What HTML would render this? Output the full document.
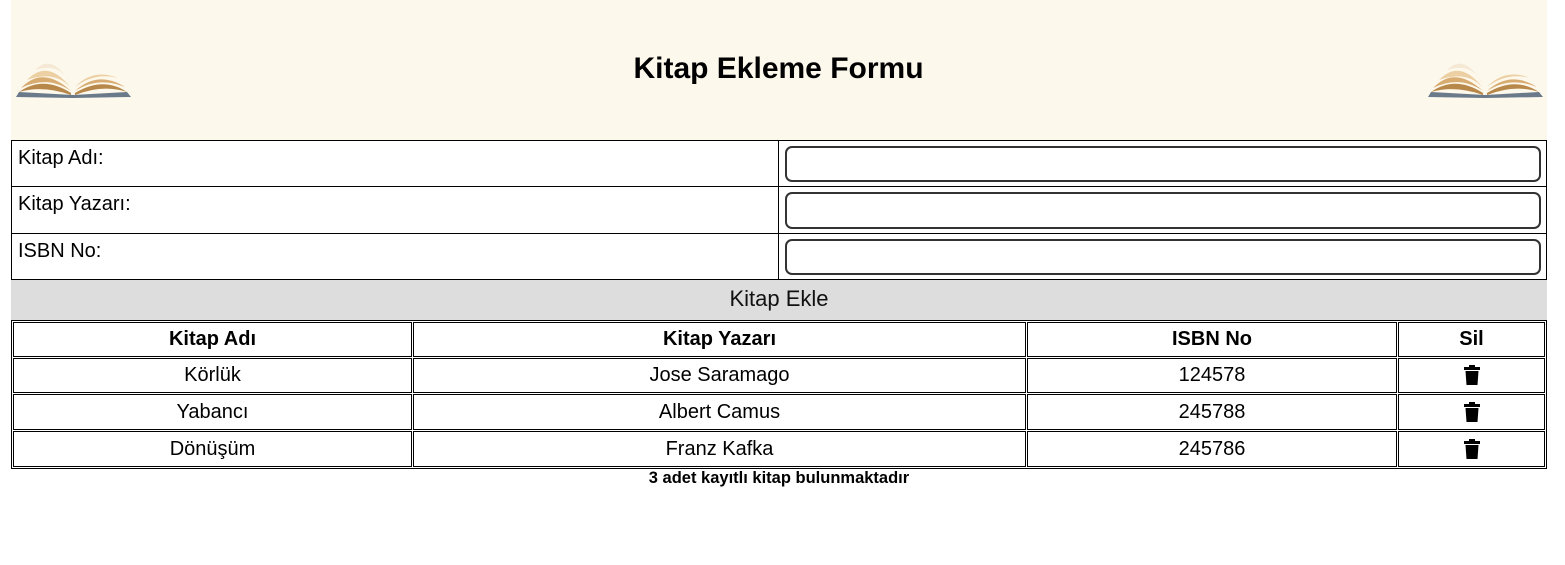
<!DOCTYPE html>
<html><head><meta charset="utf-8"><style>
body{margin:0;width:1565px;height:565px;background:#fff;font-family:"Liberation Sans",Arial,sans-serif;position:relative;overflow:hidden}
.a{position:absolute;box-sizing:border-box}
.hdr{left:11px;top:0;width:1536px;height:140px;background:#fdf8ec}
h1{position:absolute;left:0;width:1557px;top:52px;margin:0;text-align:center;font-size:30px;font-weight:bold}
.lc{left:11px;width:768px;border:1px solid #000;font-size:20px;padding:6px 6px}
.rc{left:778px;width:769px;border:1px solid #000;border-left:none}
.in{left:785px;width:756px;border:2px solid #333;border-radius:7px;background:#fff}
.btn{left:11px;top:280px;width:1536px;height:40px;background:#ddd;text-align:center;font-size:22px;line-height:38px;color:#111}
.tb{left:11px;top:320px;width:1536px;height:149px;border:1px solid #000}
.c{border:1px solid #000;font-size:20px;text-align:center;display:flex;align-items:center;justify-content:center}
.h{font-weight:bold}
</style></head><body>
<div class="a hdr"></div>
<svg class="a" style="left:13px;top:40px" width="120" height="60" viewBox="0 0 120 60">
<path d="M3 57 L60 58 L118 57 L114 52 L60 55 L6 52Z" fill="#6a7a8a"/>
<path d="M6 52 Q30 35 58 53 L58 55 Q30 45 6 52Z" fill="#b8884a"/>
<path d="M8 48 Q30 25 58 51 Q35 35 8 48Z" fill="#d8ac70"/>
<path d="M14 40 Q35 18 58 48 Q42 30 14 40Z" fill="#ecd0a4"/>
<path d="M22 30 Q40 12 58 45 Q48 22 22 30Z" fill="#f5e8d4"/>
<path d="M62 55 Q90 44 114 52 Q90 36 62 53Z" fill="#b8884a"/>
<path d="M62 51 Q85 30 112 47 Q85 36 62 51Z" fill="#d8ac70"/>
<path d="M62 47 Q80 28 105 38 Q82 32 62 47Z" fill="#ecd0a4"/>
<path d="M61 46 Q68 22 74 3 Q67 25 61 46Z" fill="#eee0cc"/>
</svg>
<svg class="a" style="left:1425px;top:40px" width="120" height="60" viewBox="0 0 120 60">
<path d="M3 57 L60 58 L118 57 L114 52 L60 55 L6 52Z" fill="#6a7a8a"/>
<path d="M6 52 Q30 35 58 53 L58 55 Q30 45 6 52Z" fill="#b8884a"/>
<path d="M8 48 Q30 25 58 51 Q35 35 8 48Z" fill="#d8ac70"/>
<path d="M14 40 Q35 18 58 48 Q42 30 14 40Z" fill="#ecd0a4"/>
<path d="M22 30 Q40 12 58 45 Q48 22 22 30Z" fill="#f5e8d4"/>
<path d="M62 55 Q90 44 114 52 Q90 36 62 53Z" fill="#b8884a"/>
<path d="M62 51 Q85 30 112 47 Q85 36 62 51Z" fill="#d8ac70"/>
<path d="M62 47 Q80 28 105 38 Q82 32 62 47Z" fill="#ecd0a4"/>
<path d="M61 46 Q68 22 74 3 Q67 25 61 46Z" fill="#eee0cc"/>
</svg>
<h1>Kitap Ekleme Formu</h1>
<div class="a lc" style="top:140px;height:47px">Kitap Adı:</div>
<div class="a lc" style="top:186px;height:48px">Kitap Yazarı:</div>
<div class="a lc" style="top:233px;height:47px">ISBN No:</div>
<div class="a rc" style="top:140px;height:47px"></div>
<div class="a rc" style="top:186px;height:48px"></div>
<div class="a rc" style="top:233px;height:47px"></div>
<div class="a in" style="top:146px;height:36px"></div>
<div class="a in" style="top:192px;height:37px"></div>
<div class="a in" style="top:239px;height:36px"></div>
<div class="a btn">Kitap Ekle</div>
<div class="a tb"></div>
<div class="a c h" style="left:13px;top:322px;width:399px;height:35px">Kitap Adı</div>
<div class="a c h" style="left:413px;top:322px;width:613px;height:35px">Kitap Yazarı</div>
<div class="a c h" style="left:1027px;top:322px;width:370px;height:35px">ISBN No</div>
<div class="a c h" style="left:1398px;top:322px;width:147px;height:35px">Sil</div>

<div class="a c" style="left:13px;top:358px;width:399px;height:35px">Körlük</div>
<div class="a c" style="left:413px;top:358px;width:613px;height:35px">Jose Saramago</div>
<div class="a c" style="left:1027px;top:358px;width:370px;height:35px">124578</div>
<div class="a c" style="left:1398px;top:358px;width:147px;height:35px"><svg width="18" height="21" viewBox="0 0 18 21"><rect x="1" y="2" width="16" height="3" fill="#000"/><rect x="6" y="0" width="6" height="3" fill="#000"/><path d="M2.5 6 H15.5 L14.5 20 H3.5Z" fill="#000"/></svg></div>

<div class="a c" style="left:13px;top:394px;width:399px;height:36px">Yabancı</div>
<div class="a c" style="left:413px;top:394px;width:613px;height:36px">Albert Camus</div>
<div class="a c" style="left:1027px;top:394px;width:370px;height:36px">245788</div>
<div class="a c" style="left:1398px;top:394px;width:147px;height:36px"><svg width="18" height="21" viewBox="0 0 18 21"><rect x="1" y="2" width="16" height="3" fill="#000"/><rect x="6" y="0" width="6" height="3" fill="#000"/><path d="M2.5 6 H15.5 L14.5 20 H3.5Z" fill="#000"/></svg></div>

<div class="a c" style="left:13px;top:431px;width:399px;height:36px">Dönüşüm</div>
<div class="a c" style="left:413px;top:431px;width:613px;height:36px">Franz Kafka</div>
<div class="a c" style="left:1027px;top:431px;width:370px;height:36px">245786</div>
<div class="a c" style="left:1398px;top:431px;width:147px;height:36px"><svg width="18" height="21" viewBox="0 0 18 21"><rect x="1" y="2" width="16" height="3" fill="#000"/><rect x="6" y="0" width="6" height="3" fill="#000"/><path d="M2.5 6 H15.5 L14.5 20 H3.5Z" fill="#000"/></svg></div>

<div class="a" style="left:11px;width:1536px;top:469px;text-align:center;font-size:16.5px;font-weight:bold">3 adet kayıtlı kitap bulunmaktadır</div>
</body></html>
